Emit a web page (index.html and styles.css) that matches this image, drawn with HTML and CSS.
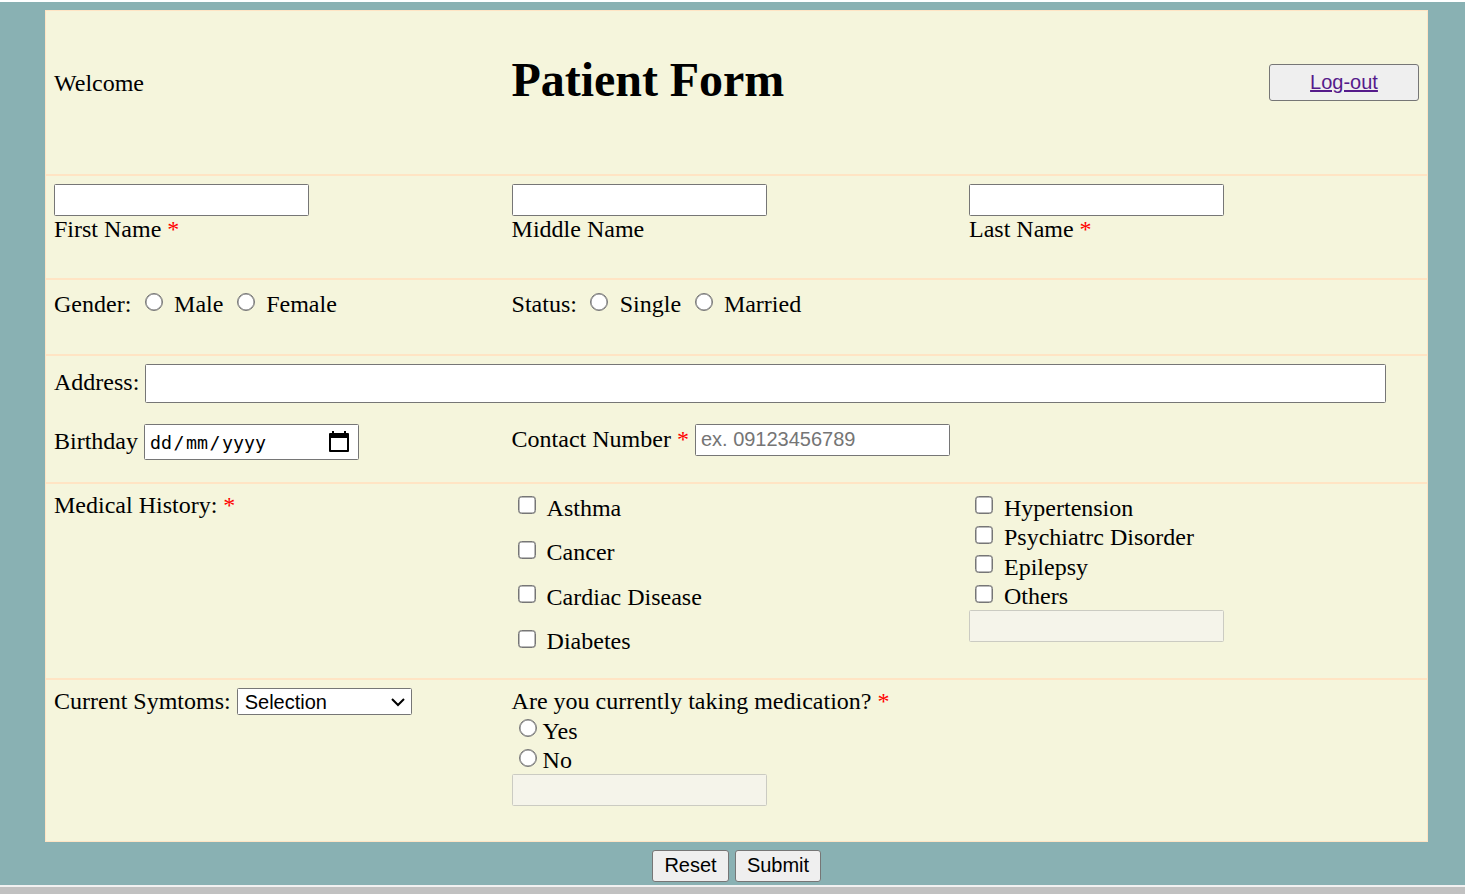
FILE: index.html
```html
<!DOCTYPE html>
<html lang="en">
<head>
<meta charset="utf-8">
<title>Patient Form</title>
<link rel="stylesheet" href="styles.css">
</head>
<body>
<form class="page">
  <main class="panel">
    <section class="row row-header">
      <div class="welcome">Welcome</div>
      <h1 class="title">Patient Form</h1>
      <div class="logout-cell"><button type="button" class="btn logout"><a class="link">Log-out</a></button></div>
    </section>
    <section class="row row-names">
      <div><input class="field" type="text"><div class="label">First Name <span class="req">*</span></div></div>
      <div><input class="field" type="text"><div class="label">Middle Name</div></div>
      <div><input class="field" type="text"><div class="label">Last Name <span class="req">*</span></div></div>
    </section>
    <section class="row row-status">
      <div class="line"><span>Gender:</span><input class="radio" type="radio" name="g"><span>Male</span><input class="radio" type="radio" name="g"><span>Female</span></div>
      <div class="line"><span>Status:</span><input class="radio" type="radio" name="s"><span>Single</span><input class="radio" type="radio" name="s"><span>Married</span></div>
    </section>
    <section class="row row-contact">
      <div class="line address"><span class="address-label">Address:</span><input class="field field-wide" type="text"></div>
      <div class="line birthday"><span class="birthday-label">Birthday</span>
        <div class="field date"><span class="date-text"><span>dd</span><span class="sep">/</span><span>mm</span><span class="sep">/</span><span>yyyy</span></span>
          <svg class="calendar" width="20" height="22" viewBox="0 0 20 22"><path d="M1 2h18q1 0 1 1v17q0 1-1 1H1q-1 0-1-1V3q0-1 1-1zM2 7v12h16V7z" fill-rule="evenodd"/><path d="M3 0h2v3H3zM15 0h2v3h-2z"/></svg>
        </div>
      </div>
      <div class="line contact"><span class="contact-label">Contact Number <span class="req">*</span></span><input class="field" type="text" placeholder="ex. 09123456789"></div>
    </section>
    <section class="row row-history">
      <div class="history-label">Medical History: <span class="req">*</span></div>
      <div class="checks checks-loose">
        <label class="check"><input class="box" type="checkbox">Asthma</label>
        <label class="check"><input class="box" type="checkbox">Cancer</label>
        <label class="check"><input class="box" type="checkbox">Cardiac Disease</label>
        <label class="check"><input class="box" type="checkbox">Diabetes</label>
      </div>
      <div class="checks">
        <label class="check"><input class="box" type="checkbox">Hypertension</label>
        <label class="check"><input class="box" type="checkbox">Psychiatrc Disorder</label>
        <label class="check"><input class="box" type="checkbox">Epilepsy</label>
        <label class="check"><input class="box" type="checkbox">Others</label>
        <input class="field" type="text" disabled>
      </div>
    </section>
    <section class="row row-symptoms">
      <div class="line"><span class="symptoms-label">Current Symtoms:</span>
        <div class="field select"><span>Selection</span><svg width="14" height="9" viewBox="0 0 14 9"><path d="M1 1l6 6 6-6" fill="none" stroke="#000" stroke-width="2"/></svg></div>
      </div>
      <div>
        <div class="label">Are you currently taking medication? <span class="req">*</span></div>
        <div class="answers">
          <label class="check answer"><input class="radio" type="radio" name="m">Yes</label>
          <label class="check answer"><input class="radio" type="radio" name="m">No</label>
        </div>
        <input class="field" type="text" disabled>
      </div>
    </section>
  </main>
  <div class="actions"><button type="button" class="btn reset">Reset</button><button type="button" class="btn submit">Submit</button></div>
</form>
<div class="scrollbar"></div>
</body>
</html>
```
FILE: styles.css
```css
* { box-sizing: border-box; }

body {
  margin: 0;
  height: 894px;
  overflow: hidden;
  border-top: 2px solid #fff;
  background: #fff;
  color: #000;
  font: 24px/26px "Liberation Serif", "Times New Roman", serif;
}

.page {
  height: 883px;
  padding: 8px 37px 0 45px;
  background: #89b1b3;
}

.panel {
  width: 1383px;
  height: 832px;
  border: 1px solid #ffe4c4;
  background: #f5f5dc;
}

.row {
  display: grid;
  grid-template-columns: 457.6px 457.4px 1fr;
  align-items: start;
  align-content: start;
  padding: 8px 8px 0;
  border-bottom: 2px solid #ffe4c4;
}

.row-header { height: 165px; padding-top: 0; }
.row-names { height: 104px; }
.row-status { height: 76px; padding-top: 11px; }
.row-contact { height: 128px; row-gap: 21px; }
.row-history { height: 196px; }
.row-symptoms { height: 161px; border-bottom: 0; }

.welcome { padding-top: 59px; }
.title { margin: 42px 0 0; font-size: 48px; line-height: 54px; letter-spacing: -0.05px; }
.logout-cell { display: flex; justify-content: flex-end; padding-top: 53px; }

.btn {
  height: 32px;
  padding: 0 0 2px;
  border: 1px solid #767676;
  border-radius: 3px;
  background: #efefef;
  color: #000;
  font: 20px/28px "Liberation Sans", Arial, sans-serif;
}

.logout { width: 150px; height: 37px; }
.link { color: #551a8b; text-decoration: underline; }

.field {
  display: block;
  width: 255px;
  height: 32px;
  margin: 0;
  padding: 0 5px 2px;
  border: 1px solid #767676;
  border-radius: 1.5px;
  background: #fff;
  font: 20px/24px "Liberation Sans", Arial, sans-serif;
}

.field::placeholder { color: #757575; }

.field:disabled {
  border-color: #cbcbc2;
  background: #f5f4ea;
}

.req { color: red; }

.line { display: flex; align-items: flex-start; white-space: nowrap; }

.radio, .box {
  appearance: none;
  flex: none;
  width: 18px;
  height: 18px;
  margin: 2px 11.3px 0 13.5px;
  border: 1px solid #767676;
  border-radius: 50%;
  background: #fff;
  box-shadow: inset 0 0 0 0.5px #767676;
}

.address { grid-column: 1 / -1; gap: 6px; }
.address-label { padding-top: 5px; }
.field-wide { width: 1241px; height: 39px; }

.birthday { gap: 6px; }
.birthday-label { padding-top: 4px; }

.date {
  display: flex;
  align-items: flex-start;
  justify-content: space-between;
  width: 215px;
  height: 36px;
  padding: 6px 9px 0 5px;
}

.date-text { padding-top: 1px; font: 18.27px/22px "DejaVu Sans Mono", monospace; }
.sep { padding: 0 1.5px; }

.contact-label { padding: 2px 6px 0 0; }

.checks { padding-top: 3px; }

.check { display: flex; height: 29.4px; }
.checks-loose .check { height: 44.4px; }

.box { margin: 1.45px 11px 0 6px; border-radius: 3.5px; }
.checks .field { margin-top: -2.6px; }

.symptoms-label { margin-right: 6px; }

.select {
  display: flex;
  align-items: center;
  justify-content: space-between;
  width: 175px;
  height: 27px;
  padding: 1px 6px 0 7px;
}

.answers { padding-top: 4px; }
.answer .radio { margin: 1.45px 6px 0 7px; }
.answers + .field { margin-top: -2.8px; }

.actions {
  display: flex;
  gap: 6px;
  padding: 8px 0 0 607px;
}

.reset { width: 77px; }
.submit { width: 86px; }

.scrollbar {
  height: 9px;
  border-top: 2px solid #f1f1f1;
  background: #c1c1c1;
}
```
